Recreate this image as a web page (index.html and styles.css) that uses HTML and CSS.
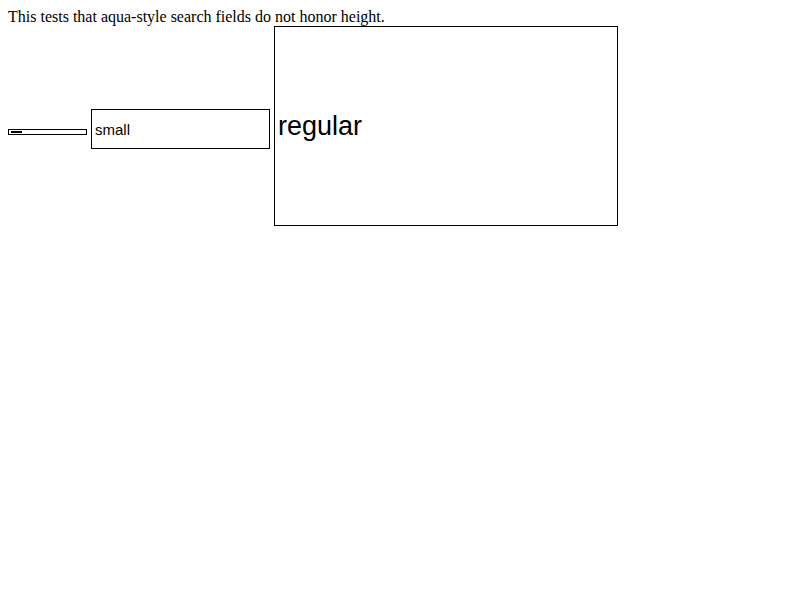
FILE: index.html
```html
<!DOCTYPE html>
<html>
<head>
<meta charset="utf-8">
<link rel="stylesheet" href="styles.css">
</head>
<body>
<p class="intro">This tests that aqua-style search fields do not honor height.</p>
<div class="fields">
  <span class="field mini"><span class="label">mini</span></span>
  <span class="field small"><span class="label">small</span></span>
  <span class="field regular"><span class="label">regular</span></span>
</div>
</body>
</html>
```
FILE: styles.css
```css
body {
  margin: 8px;
  font-family: "Liberation Serif", "Times New Roman", serif;
  font-size: 16px;
  color: #000;
  background: #fff;
}
.intro {
  margin: 0;
  line-height: 18px;
}
.fields {
  display: flex;
  align-items: center;
  gap: 4px;
  font-family: "Liberation Sans", Arial, sans-serif;
}
.field {
  box-sizing: border-box;
  border: 1px solid #000;
  display: flex;
  align-items: center;
  overflow: hidden;
}
.mini {
  width: 79px;
  height: 6px;
  margin-top: 12px;
  padding-left: 2px;
  font-size: 3px;
  line-height: 3px;
}
.mini .label {
  display: block;
  height: 2px;
  width: 11px;
  background: #000;
  font-size: 2px;
  color: transparent;
}
.small {
  width: 179px;
  height: 40px;
  padding-left: 3px;
  font-size: 15px;
  margin-top: 6px;
}
.regular {
  width: 344px;
  height: 200px;
  padding-left: 3px;
  font-size: 27px;
}
```
